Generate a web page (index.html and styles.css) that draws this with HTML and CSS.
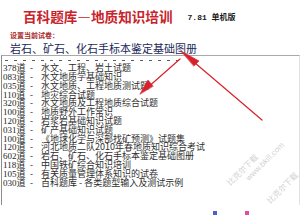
FILE: index.html
```html
<!DOCTYPE html>
<html lang="zh">
<head>
<meta charset="utf-8">
<title>百科题库—地质知识培训</title>
<link rel="stylesheet" href="styles.css">
</head>
<body>
<div class="page">
  <header class="head">
    <h1 class="title">百科题库—地质知识培训</h1>
    <span class="ver">7.81 单机版</span>
  </header>
  <div class="label">设置当前试卷：</div>
  <div class="current">岩石、矿石、化石手标本鉴定基础图册</div>
  <div class="list">
    <div class="dashes"><span></span><span></span><span></span><span></span><span></span><span></span><span></span><span></span><span></span><span></span><span></span><span></span><span></span><span></span><span></span><span></span><span></span><span></span><span></span><span></span></div>
    <div class="row"><span class="num">378道</span><span class="sep">-</span><span class="txt">水文、工程、岩土试题</span></div>
    <div class="row"><span class="num">083道</span><span class="sep">-</span><span class="txt">水文地质学基础知识</span></div>
    <div class="row"><span class="num">035道</span><span class="sep">-</span><span class="txt">水文地质、工程地质测试题</span></div>
    <div class="row"><span class="num">110道</span><span class="sep">-</span><span class="txt">地灾综合试题</span></div>
    <div class="row"><span class="num">320道</span><span class="sep">-</span><span class="txt">水文地质及工程地质综合试题</span></div>
    <div class="row"><span class="num">100道</span><span class="sep">-</span><span class="txt">地质野外工作常识</span></div>
    <div class="row"><span class="num">120道</span><span class="sep">-</span><span class="txt">岩浆岩基础知识试题</span></div>
    <div class="row"><span class="num">031道</span><span class="sep">-</span><span class="txt">矿产基础知识试题</span></div>
    <div class="row"><span class="num">100道</span><span class="sep">-</span><span class="txt">《地球化学与深部找矿预测》试题集</span></div>
    <div class="row"><span class="num">120道</span><span class="sep">-</span><span class="txt">河北地质二队2010年春地质知识综合考试</span></div>
    <div class="row"><span class="num">602道</span><span class="sep">-</span><span class="txt">岩石、矿石、化石手标本鉴定基础图册</span></div>
    <div class="row"><span class="num">118道</span><span class="sep">-</span><span class="txt">中国铁矿综合知识培训</span></div>
    <div class="row"><span class="num">105道</span><span class="sep">-</span><span class="txt">有关质量管理体系知识的试卷</span></div>
    <div class="row"><span class="num">030道</span><span class="sep">-</span><span class="txt">百科题库 - 各类题型输入及测试示例</span></div>
  </div>
  <svg class="arrows" width="303" height="215" viewBox="0 0 303 215">
    <g stroke="#d9212b" fill="#d9212b" stroke-linecap="round">
      <line x1="262" y1="120" x2="188" y2="57" stroke-width="1.2"/>
      <polygon points="181,51 199,61 194,66" stroke-width="0.6"/>
      <line x1="180" y1="59" x2="146" y2="89" stroke-width="1.2"/>
      <polygon points="140,94 148,80 153,86" stroke-width="0.6"/>
    </g>
  </svg>
  <div class="wm wm1">比克尔下载</div>
  <div class="wm wm2">www.bkill.com</div>
  <div class="wm wm3">比克尔下载</div>
  <span class="mark mark-blue"></span>
  <span class="mark mark-pink"></span>
</div>
</body>
</html>
```
FILE: styles.css
```css
html, body {
  margin: 0;
  padding: 0;
  background: #ffffff;
}
.page {
  position: relative;
  width: 303px;
  height: 215px;
  overflow: hidden;
  background: #ffffff;
  font-family: "Noto Sans CJK SC", sans-serif;
}
.head {
  display: flex;
  align-items: center;
  height: 18px;
  padding: 7px 0 0 23px;
}
.title {
  margin: 0;
  font-size: 13.6px;
  line-height: 18px;
  font-weight: 700;
  color: #c8232b;
}
.ver {
  margin-left: 15px;
  font-family: "Liberation Mono", "Noto Sans CJK SC", monospace;
  font-size: 8px;
  font-weight: 700;
  color: #1a1a1a;
  white-space: pre;
}
.label {
  margin-top: 6px;
  padding-left: 10px;
  font-size: 7px;
  line-height: 9px;
  font-weight: 700;
  color: #a8281f;
}
.current {
  margin-top: 1.5px;
  padding-left: 10px;
  font-size: 11px;
  line-height: 12px;
  color: #1c2a5c;
}
.list {
  margin: 1px 0 0 1px;
  width: 299px;
  height: 150px;
  box-sizing: border-box;
  border-top: 1px solid #a9a9a9;
  border-left: 1px solid #8c8c8c;
  border-right: 1px solid #e2e2e2;
  font-size: 9px;
  line-height: 8.8px;
  color: #2e2e2e;
}
.dashes {
  display: flex;
  align-items: flex-start;
  gap: 6px;
  height: 8.8px;
  box-sizing: border-box;
  padding: 4px 0 0 3px;
}
.dashes span {
  width: 3px;
  height: 0;
  border-top: 1px solid #5a5a5a;
  flex: none;
}
.row {
  display: flex;
  white-space: pre;
}
.num {
  width: 22px;
  padding-left: 1px;
  font-family: "Liberation Serif", "Noto Sans CJK SC", serif;
  color: #1e1e1e;
  flex: none;
}
.sep {
  width: 11px;
  padding-left: 5px;
  font-family: "Liberation Serif", serif;
  flex: none;
}
.txt {
  font-family: "Noto Sans CJK SC", sans-serif;
}
.arrows {
  position: absolute;
  left: 0;
  top: 0;
  pointer-events: none;
}
.wm {
  position: absolute;
  font-size: 8px;
  line-height: 9px;
  color: #d2d2d2;
  transform: rotate(-45deg);
  white-space: nowrap;
}
.wm1 {
  left: 222px;
  top: 165px;
}
.wm2 {
  left: 240px;
  top: 157px;
  font-family: "Liberation Sans", sans-serif;
}
.wm3 {
  left: 262px;
  top: 183px;
}
.mark {
  position: absolute;
  top: 211px;
  width: 4px;
  height: 4px;
}
.mark-blue {
  left: 213px;
  background: #4a5fd0;
}
.mark-pink {
  left: 245px;
  background: #e64aa6;
}
```
